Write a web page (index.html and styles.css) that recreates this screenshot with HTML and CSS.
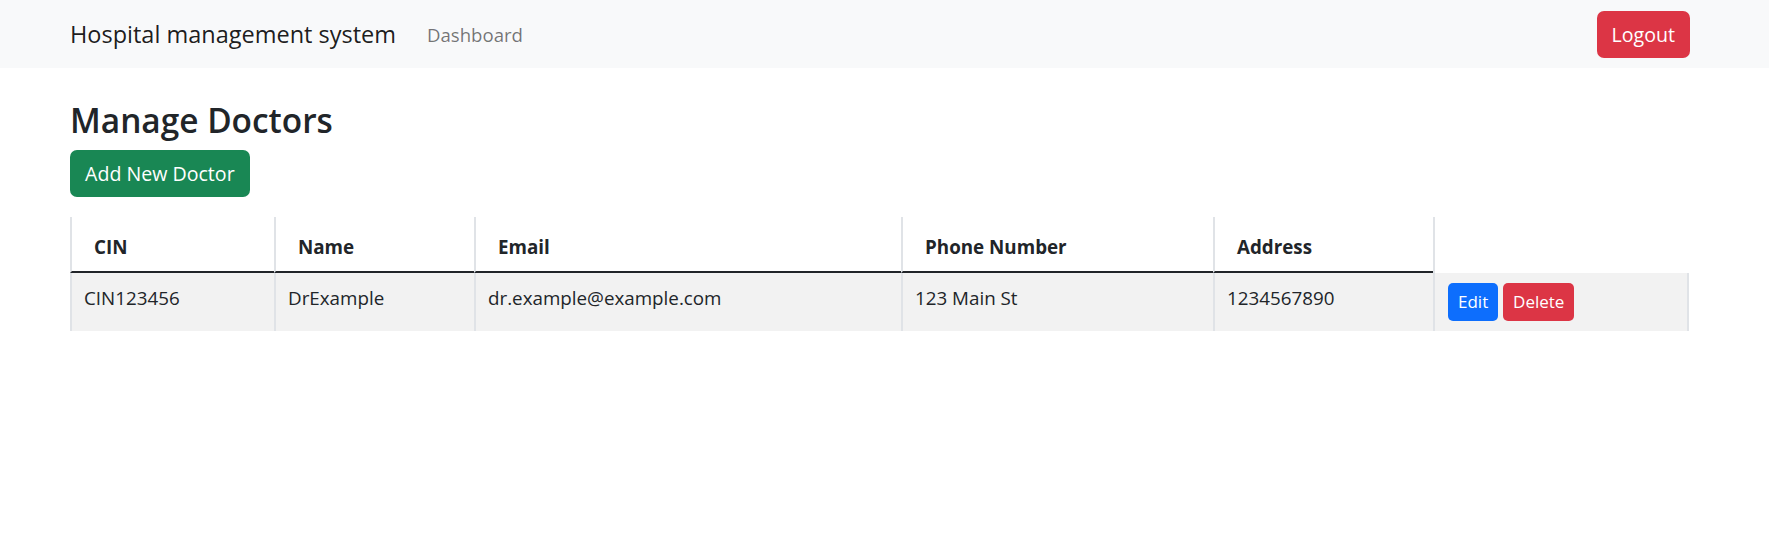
FILE: index.html
```html
<!DOCTYPE html>
<html lang="en">
<head>
<meta charset="utf-8">
<title>Manage Doctors</title>
<link rel="stylesheet" href="styles.css">
</head>
<body>
<nav class="navbar">
  <div class="nav-inner">
    <a class="brand" href="#">Hospital management system</a>
    <a class="nav-link" href="#">Dashboard</a>
    <button class="btn btn-danger logout">Logout</button>
  </div>
</nav>
<main class="container">
  <h3 class="title">Manage Doctors</h3>
  <button class="btn btn-success">Add New Doctor</button>
  <table class="table">
    <colgroup>
      <col class="c1"><col class="c2"><col class="c3"><col class="c4"><col class="c5"><col class="c6">
    </colgroup>
    <thead>
      <tr>
        <th>CIN</th>
        <th>Name</th>
        <th>Email</th>
        <th>Phone Number</th>
        <th>Address</th>
        <th class="th-empty"></th>
      </tr>
    </thead>
    <tbody>
      <tr>
        <td>CIN123456</td>
        <td>DrExample</td>
        <td>dr.example@example.com</td>
        <td>123 Main St</td>
        <td>1234567890</td>
        <td class="actions"><button class="btn-sm btn-primary">Edit</button> <button class="btn-sm btn-danger">Delete</button></td>
      </tr>
    </tbody>
  </table>
</main>
</body>
</html>
```

FILE: styles.css
```css
* { box-sizing: border-box; }

body {
  margin: 0;
  font-family: "Open Sans", "Noto Sans", sans-serif;
  color: #212529;
  background: #fff;
}

.navbar {
  background: #f8f9fa;
  height: 68px;
}

.nav-inner {
  display: flex;
  align-items: center;
  height: 68px;
  margin-left: 70px;
  width: 1620px;
}

.brand {
  font-size: 23.5px;
  color: rgba(0, 0, 0, 0.9);
  text-decoration: none;
  margin-right: 31px;
  line-height: 38px;
}

.nav-link {
  font-size: 18.6px;
  color: rgba(0, 0, 0, 0.55);
  text-decoration: none;
}

.logout {
  margin-left: auto;
}

.btn {
  font-family: inherit;
  font-size: 19.6px;
  line-height: 31px;
  padding: 8px 15px;
  border: 0;
  border-radius: 7px;
  color: #fff;
  cursor: pointer;
}

.btn-danger { background: #dc3545; color: #fff; }
.btn-success { background: #198754; color: #fff; }
.btn-primary { background: #0d6efd; color: #fff; }

.container {
  margin-left: 70px;
  width: 1620px;
  padding-top: 31px;
}

.title {
  margin: 0 0 9px;
  font-size: 33.4px;
  line-height: 42px;
  font-weight: 600;
}

.table {
  margin-top: 20px;
  width: 1619px;
  table-layout: fixed;
  border-collapse: separate;
  border-spacing: 0;
  font-size: 18.8px;
  line-height: 30px;
}

.c1 { width: 204px; }
.c2 { width: 200px; }
.c3 { width: 427px; }
.c4 { width: 312px; }
.c5 { width: 220px; }
.c6 { width: 256px; }

.table th {
  text-align: left;
  font-weight: 700;
  padding: 15px 22px 9px;
  border-left: 2px solid #e0e3e7;
  border-bottom: 2px solid #212529;
}

.table th.th-empty {
  border-bottom: 0;
}

.table td {
  vertical-align: top;
  padding: 10px 12px 0;
  background: #f2f2f2;
  border-left: 2px solid #e0e3e7;
}

.table td.actions {
  padding: 10px 13px 10px;
  border-right: 2px solid #e0e3e7;
}

.btn-sm {
  font-family: inherit;
  font-size: 17px;
  line-height: 26px;
  padding: 6px 10px;
  border: 0;
  border-radius: 5px;
  cursor: pointer;
}
```
